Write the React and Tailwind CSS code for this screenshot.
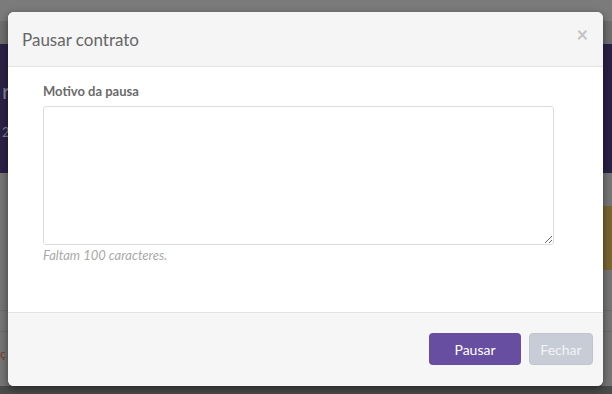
import { useState } from "react";

function Backdrop() {
  return (
    <div className="flex flex-col h-[394px] w-[612px] overflow-hidden">
      <div className="h-[21px] shrink-0 bg-[#7b7b7b]" />
      <div className="h-[23px] shrink-0 bg-[#6f6f6f]" />
      <div className="h-[129px] shrink-0 bg-[#2c2246] text-[#8a84a0] pl-[2px] flex flex-col">
        <span className="mt-[36px] text-[22px] leading-none">r</span>
        <span className="mt-[24px] text-[13px] leading-none">2</span>
      </div>
      <div className="flex-1 min-h-0 overflow-hidden bg-[#767676] flex flex-col">
        <div className="flex justify-end mt-[33px]">
          <div className="w-[10px] h-[64px] bg-[#7a6632] rounded-l-[3px]" />
        </div>
        <div className="mt-[40px] h-px bg-[#6c6c6c]" />
        <div className="mt-[20px] h-px bg-[#6c6c6c]" />
        <span className="mt-[16px] text-[12px] leading-none text-[#7a3a30]">ç</span>
      </div>
      <div className="h-[8px] shrink-0 bg-[#4b4b4b]" />
    </div>
  );
}

export default function App() {
  const [text, setText] = useState("");
  const left = 100 - text.length;

  return (
    <div className="relative w-[612px] h-[394px] overflow-hidden" style={{ fontFamily: "Lato, 'Noto Sans', sans-serif" }}>
      <Backdrop />
      <div className="absolute left-[8px] top-[12px] w-[595px] h-[374px] bg-white rounded-[6px] overflow-hidden flex flex-col shadow-[0_3px_9px_rgba(0,0,0,0.5)]">
        <div className="h-[55px] bg-[#f5f5f5] border-b border-[#e3e3e3] flex items-center justify-between pl-[14px] pr-[15px] shrink-0">
          <h4 className="text-[17px] text-[#666] font-normal leading-none mt-[1px]">Pausar contrato</h4>
          <button className="text-[#c4c4c4] text-[20px] leading-none font-bold -mt-[10px]">×</button>
        </div>
        <div className="flex-1 px-[35px] pt-[15px]">
          <label className="block text-[13px] font-bold text-[#6b6b6b] leading-[18px]">Motivo da pausa</label>
          <textarea
            value={text}
            maxLength={100}
            onChange={(e) => setText(e.target.value)}
            className="mt-[6px] block w-[511px] h-[139px] border border-[#dcdcdc] rounded-[3px] outline-none p-2 text-[13px]"
          />
          <p className="mt-[1px] text-[13px] italic text-[#a9a9a9] leading-[18px]">Faltam {left} caracteres.</p>
        </div>
        <div className="h-[74px] bg-[#f6f6f6] border-t border-[#e3e3e3] flex items-start justify-end gap-[8px] pt-[20px] pr-[10px] shrink-0">
          <button className="w-[92px] h-[32px] rounded-[4px] bg-[#684ea0] text-white text-[14px]">Pausar</button>
          <button className="w-[64px] h-[32px] rounded-[4px] bg-[#c8ccd6] border border-[#bfc3cd] text-[#f2f3f7] text-[14px]">Fechar</button>
        </div>
      </div>
    </div>
  );
}
